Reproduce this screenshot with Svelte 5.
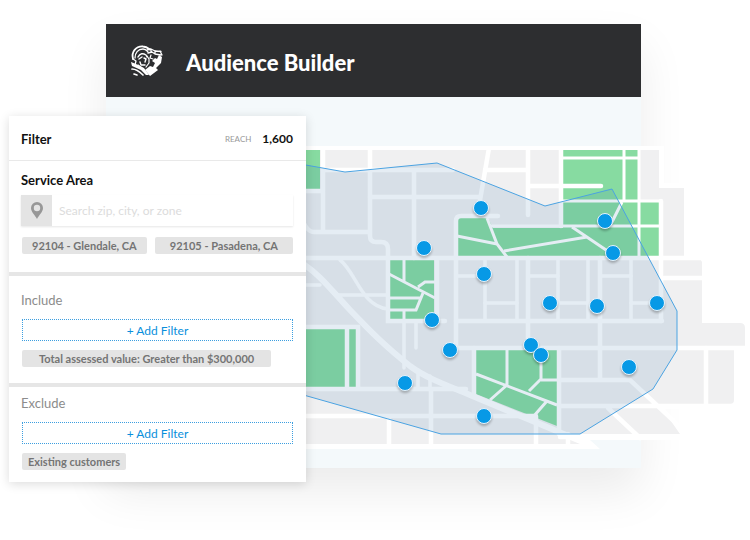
<!--
    AudienceBuilder
    ===============
    Filter panel laid over a service area map, inside the app window.
-->
<script>
    let search = $state('');

    const reach = '1,600';
    const zones = ['92104 - Glendale, CA', '92105 - Pasadena, CA'];

    const groups = [
        { id: 'include', title: 'Include', wide: true,  tags: ['Total assessed value: Greater than $300,000'] },
        { id: 'exclude', title: 'Exclude', wide: false, tags: ['Existing customers'] },
    ];

    // households on the map, in map units
    const pins = [
        [481, 208], [605, 221], [424, 248], [613, 253], [484, 274],
        [550, 303], [597, 306], [657, 303], [432, 320], [450, 350],
        [531, 345], [541, 355], [405, 383], [629, 367], [484, 416],
    ];

    const mainRoads = [
        'M300 191H323 M323 148V232 M300 214Q306 232 314 232H370',
        'M370 148V236Q370 242 376 242H381Q388 242 388 249V321H445',
        'M323 170H453 M414 170V258 M370 197H480 M489 148L479 206',
        'M485 170H528 M528 148V215 M528 186H601 M561 148V226',
        'M498 216H461Q456 216 456 221V348',
        'M300 258H704 M437 258V321 M456 321H662 M445 348H748',
        'M661 201V321 M664 278H704 M706 348V406',
        'M528 258V348 M600 258V380 M559 348V434 M474 348V396',
        'M559 380H630L692 438 M559 406H738 M608 408L640 438',
        'M300 327H358V389 M347 327V389 M300 389H466',
        'M300 416H534 M389 416V446 M431 389V446 M536 416V446',
        'M568 434V446 M560 437H692',
    ];

    const sideRoads = [
        'M485 258V321 M517 258V321 M558 258V321 M588 258V321 M631 258V321',
        'M456 276H485 M528 276H558 M600 276H631',
        'M485 303H517 M558 303H588 M631 303H661',
        'M300 285H320 M338 295H388 M404 321V368 M416 321V348 M418 372V389 M430 376V389',
        'M340 260C356 272 361 306 388 309',
    ];

    const paths = [
        'M563 158H639 M563 201H661 M624 150V201 M639 150V257 M490 226H661',
        'M622 202L611 224 M572 227L612 254 M587 237L504 251',
        'M457 236L497 244 M487 218L497 244L507 257',
        'M404 260V281 M389 274L435 298 M418 287L425 282H435',
        'M423 293L416 310H389 M389 298H421 M404 310V320',
        'M507 350V385 M476 374L557 405 M541 356V379L529 391 M541 380H557',
        'M507 385L490 400 M547 401L533 417',
    ];
</script>

<main class="stage">
    <section class="window">
        <header class="titlebar">
            <svg class="logo" viewBox="0 0 33 32" aria-hidden="true">
                <g fill="none" stroke="#fff" stroke-linecap="round" stroke-linejoin="round">
                    <path stroke-width="1.8" d="M3 14C1 7 6 1 13 1.5C16 1.5 18 3 20 4.5" />
                    <path stroke-width="1.3" d="M5 13C5 8 8 4 13 4C16 4 17 6 18 7M3 14L6 16L5 20L8 22" />
                    <path stroke-width="1.4" d="M8 12C10 8 13 8 16 10L17 12M9 14L12 12M14 13L16 14L15 17M10 17L11 20L15 20" />
                    <path stroke-width="1.3" d="M17 5L21 4L25 6L31 6.5M18 8L22 7L25 9L31 10M25 6V9M30 6L32 10M21 4V7" />
                    <path stroke-width="1.2" d="M8 20L12 23M17 11L19 14V18L16 22M21 10L20 13L23 14" />
                    <path stroke-width="1.7" d="M2 24C7 24 10 27 13 30M4 29L7 30" />
                </g>
                <path fill="#fff" d="M25 13L27 14L29 10L32 12L31 18L26 23L28 25L20 31L15 25L20 21L23 22L25 18L22 16Z" />
                <path fill="#fff" d="M1 17L6 19L14 23L19 30L16 30L11 25L2 21Z" />
            </svg>
            <h1>Audience Builder</h1>
        </header>
    </section>

    <svg class="map" viewBox="306 146 444 304" role="img" aria-label="Service area map">
        <path
            fill="#fff"
            d="M300 146H664V183H688V256H700Q706 256 706 262V319H743Q750 319 750 326V350H739V402Q739 409 732 409H665L692 440H590L600 449H300Z"
        />
        <path
            fill="#f0f0f1"
            d="M300 150H659V188H684V257H699L702 262V323H740Q745 323 745 328V347H734V400Q734 404 730 404H659L680 434H562L586 444H300Z"
        />
        <g fill="#87dba1">
            <path d="M300 150H320V189H300Z" />
            <path d="M563 150H638V201H660V256H458V218H488L493 228H563Z" />
            <path d="M390 260H434V319H390Z" />
            <path d="M300 329H345V387H300ZM349 329H356V387H349Z" />
            <path d="M476 350H557V426L476 394Z" />
        </g>
        <g fill="none" stroke="#fff" stroke-linecap="round">
            {#each mainRoads as d}
                <path {d} stroke-width="4.5" />
            {/each}
            {#each sideRoads as d}
                <path {d} stroke-width="3.5" />
            {/each}
            <path
                stroke-width="6"
                d="M300 262C318 272 333 292 350 310C372 333 385 346 410 366C426 378 446 385 470 395L590 445"
            />
            {#each paths as d}
                <path {d} stroke-width="3" stroke-linecap="butt" />
            {/each}
        </g>
        <path
            class="area"
            d="M300 164L345 172L437 163L545 206L612 189L677 311V350L653 389L580 434H441L300 394Z"
        />
        {#each pins as [x, y]}
            <circle class="pin" cx={x} cy={y} r="7.5" />
        {/each}
    </svg>

    <aside class="panel">
        <div class="summary">
            <h2>Filter</h2>
            <span class="label">REACH</span>
            <strong>{reach}</strong>
        </div>

        <div class="group service">
            <h2><label for="zone-search">Service Area</label></h2>
            <div class="search">
                <span class="marker">
                    <svg viewBox="0 0 12 17" width="12" height="17" aria-hidden="true">
                        <path
                            fill="#979797"
                            fill-rule="evenodd"
                            d="M6 0a6 6 0 0 1 6 6c0 4-4 7-6 11C4 13 0 10 0 6a6 6 0 0 1 6-6Zm0 2.8a3.2 3.2 0 1 0 0 6.4 3.2 3.2 0 0 0 0-6.4Z"
                        />
                    </svg>
                </span>
                <input id="zone-search" type="text" placeholder="Search zip, city, or zone" bind:value={search} />
            </div>
            <div class="tags zones">
                {#each zones as zone}
                    <span class="tag">{zone}</span>
                {/each}
            </div>
        </div>

        {#each groups as group}
            <div class="group {group.id}">
                <h3>{group.title}</h3>
                <button type="button">+ Add Filter</button>
                <div class="tags">
                    {#each group.tags as tag}
                        <span class="tag" class:wide={group.wide}>{tag}</span>
                    {/each}
                </div>
            </div>
        {/each}
    </aside>
</main>

<style>
    :global(body) {
        background:  #fff;
        font-family: Lato, 'Open Sans', sans-serif;
    }

    h1, h2, h3 { margin: 0; }

    /* the panel and the map both overhang the window, so all three share grid cells */
    .stage {
        display:               grid;
        grid-template-columns: 97px 200px minmax(0, 1fr) 109px;
        grid-template-rows:    92px auto 14px;
        padding:               24px 0 56px 9px;
    }

    .window {
        grid-area:  1 / 2 / 3 / 4;
        background: #f4f9fb;
        box-shadow: 0 24px 44px rgba(0, 0, 0, 0.08);
    }

    .titlebar {
        display:     flex;
        align-items: center;
        gap:         23px;
        height:      73px;
        padding:     0 24px;
        box-sizing:  border-box;
        background:  #2d2e30;
    }

    .logo {
        width:  33px;
        height: 32px;
    }

    h1 {
        padding-top: 4px;
        color:       #fff;
        font-size:   22px;
        font-weight: 900;
        line-height: 28px;
    }

    .map {
        grid-area:  2 / 3 / 3 / 5;
        width:      100%;
        margin-top: 30px;
        align-self: start;
    }

    .area {
        fill:         rgba(40, 105, 165, 0.12);
        stroke:       #4ba3e2;
        stroke-width: 1;
    }

    .pin {
        fill:         #0799e6;
        stroke:       #e6f3fc;
        stroke-width: 1;
        filter:       drop-shadow(0 2px 1px rgba(0, 0, 0, 0.25));
    }

    .panel {
        grid-area:  2 / 1 / 4 / 3;
        background: #fff;
        box-shadow: 0 2px 10px rgba(0, 0, 0, 0.14);
    }

    .summary {
        display:       flex;
        align-items:   center;
        height:        43px;
        padding:       1px 13px 0 12px;
        border-bottom: 1px solid #e9e9e9;
    }

    h2 {
        color:       #111;
        font-size:   13px;
        font-weight: 700;
        line-height: 16px;
    }

    .label {
        margin-left:  auto;
        margin-right: 11px;
        color:        #999;
        font-size:    8px;
    }

    .summary strong {
        color:     #111;
        font-size: 12px;
    }

    .group {
        padding: 0 13px 0 12px;
    }

    .service {
        padding-top:    11px;
        padding-bottom: 18px;
    }

    .include,
    .exclude {
        border-top: 4px solid #e6e6e6;
    }

    .include {
        padding-top:    16px;
        padding-bottom: 16px;
    }

    .exclude {
        padding-top:    8px;
        padding-bottom: 12px;
    }

    .search {
        display:    flex;
        height:     31px;
        margin:     7px 0 11px;
        box-shadow: 0 1px 2px rgba(0, 0, 0, 0.1);
    }

    .marker {
        display:         flex;
        align-items:     center;
        justify-content: center;
        width:           31px;
        background:      #e4e4e4;
    }

    input {
        flex:       1;
        min-width:  0;
        border:     0;
        padding:    0 7px;
        background: none;
        font:       12px Lato, sans-serif;
    }

    input::placeholder { color: #dcdcdc; }

    .tags {
        display:     flex;
        gap:         8px;
        margin-left: 1px;
    }

    .tag {
        padding:       0 6px;
        border-radius: 2px;
        background:    #e4e4e4;
        color:         #747474;
        font-size:     11px;
        font-weight:   700;
        line-height:   17px;
        text-align:    center;
    }

    .wide { padding: 0 17px; }

    .zones .tag { padding: 0 10px; }

    .zones .tag:last-child { flex: 1; }

    h3 {
        color:       #8c8c8c;
        font-size:   13px;
        font-weight: 400;
        line-height: 16px;
    }

    button {
        display:     block;
        width:       calc(100% - 1px);
        height:      22px;
        margin:      11px 0 9px 1px;
        padding:     0;
        border:      1px dotted #3d9fe0;
        background:  none;
        color:       #0a8fdc;
        font:        12px Lato, sans-serif;
        cursor:      pointer;
    }
</style>
